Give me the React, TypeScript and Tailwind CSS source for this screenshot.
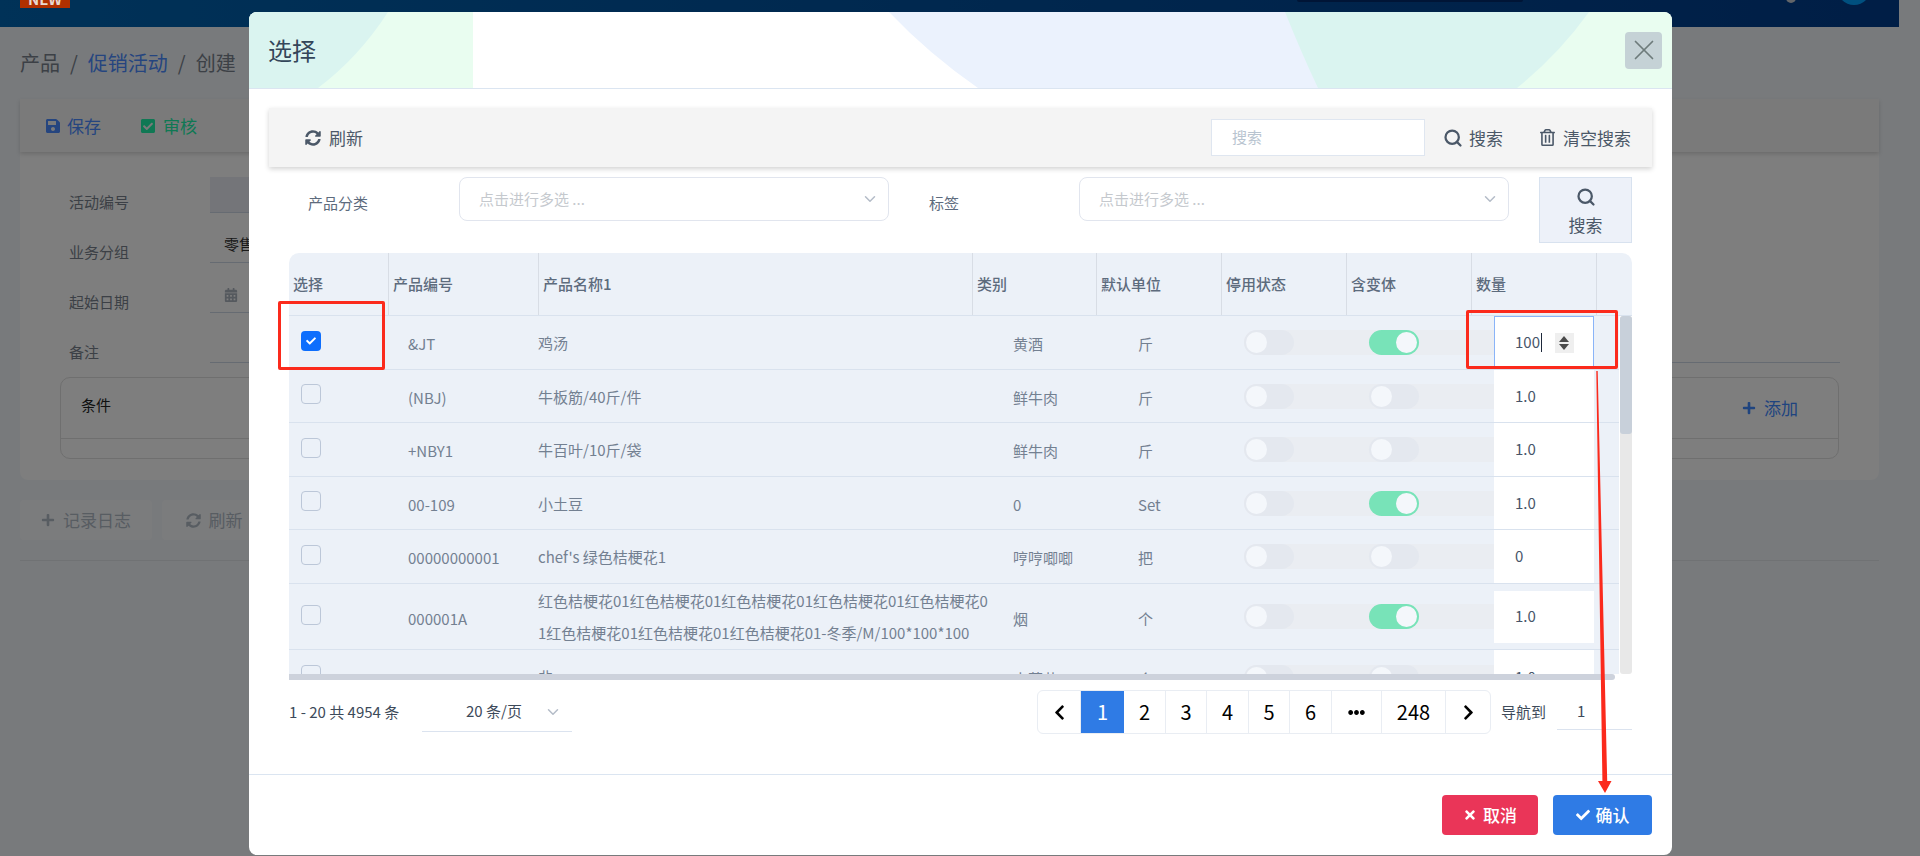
import { ChevronDown, Search, X } from "lucide-react";
import {
  FaCalendarAlt,
  FaCheck,
  FaCheckSquare,
  FaChevronLeft,
  FaChevronRight,
  FaEllipsisH,
  FaPlus,
  FaRegTrashAlt,
  FaSave,
  FaSyncAlt,
  FaTimes,
} from "react-icons/fa";

type Product = {
  code: string;
  name: string;
  category: string;
  unit: string;
  variant: boolean;
  qty: string;
  height: string;
};

const products: Product[] = [
  { code: "(NBJ)", name: "牛板筋/40斤/件", category: "鲜牛肉", unit: "斤", variant: false, qty: "1.0", height: "h-[53px]" },
  { code: "+NBY1", name: "牛百叶/10斤/袋", category: "鲜牛肉", unit: "斤", variant: false, qty: "1.0", height: "h-[54px]" },
  { code: "00-109", name: "小土豆", category: "0", unit: "Set", variant: true, qty: "1.0", height: "h-[53px]" },
  { code: "00000000001", name: "chef's 绿色桔梗花1", category: "哼哼唧唧", unit: "把", variant: false, qty: "0", height: "h-[54px]" },
];

function Toggle({ on }: { on: boolean }) {
  return (
    <div
      className={`flex h-[25px] w-[50px] items-center rounded-full px-[2px] ${
        on ? "justify-end bg-[#78e3b8]" : "justify-start bg-[#e4e8ef]"
      }`}
    >
      <div className="h-[21px] w-[21px] rounded-full bg-[#f4f7fb]" />
    </div>
  );
}

function Checkbox({ checked }: { checked?: boolean }) {
  if (checked) {
    return (
      <div className="mb-[4px] ml-[12px] flex h-[20px] w-[20px] items-center justify-center rounded-[4px] bg-[#0d6efd] text-white">
        <FaCheck size={10} />
      </div>
    );
  }
  return <div className="mb-[4px] ml-[12px] h-[20px] w-[20px] rounded-[4px] border border-[#bcc7d8]" />;
}

function Switches({ variant }: { variant: boolean }) {
  return (
    <div className="w-[273px] pl-[23px]">
      <div className="flex h-[25px] w-[250px] rounded-l-full bg-[#eaedf2]">
        <div className="w-[125px]">
          <Toggle on={false} />
        </div>
        <Toggle on={variant} />
      </div>
    </div>
  );
}

function Row({ p }: { p: Product }) {
  return (
    <div className={`flex items-center border-b border-[#d9e2ee] text-[15px] text-[#738091] ${p.height}`}>
      <div className="w-[99px]">
        <Checkbox />
      </div>
      <div className="mt-[4px] w-[150px] pl-[20px]">{p.code}</div>
      <div className="mt-[1px] w-[462px] whitespace-pre-line leading-[32px]">{p.name}</div>
      <div className="mt-[4px] w-[96px] pl-[13px]">{p.category}</div>
      <div className="mt-[4px] w-[125px] pl-[42px]">{p.unit}</div>
      <Switches variant={p.variant} />
      <div className="flex h-full w-[100px] items-center bg-white pl-[21px] text-[#475569]">{p.qty}</div>
    </div>
  );
}

function ProductTable() {
  const headers = [
    ["选择", "w-[100px]"],
    ["产品编号", "w-[150px]"],
    ["产品名称1", "w-[434px]"],
    ["类别", "w-[124px]"],
    ["默认单位", "w-[125px]"],
    ["停用状态", "w-[125px]"],
    ["含变体", "w-[125px]"],
    ["数量", "w-[125px]"],
  ];
  return (
    <div className="mx-[40px] mt-[10px] w-[1343px]">
      <div className="flex h-[63px] items-stretch rounded-t-[10px] border-b border-[#d9e2ee] bg-[#ecf1f8]">
        {headers.map(([label, width]) => (
          <div
            key={label}
            className={`flex items-center border-r border-[#d8dde5] pl-[4px] text-[15px] font-medium text-[#5d6b7d] ${width}`}
          >
            {label}
          </div>
        ))}
      </div>
      <div className="flex h-[358px] overflow-hidden">
        <div className="w-[1331px] bg-[#ecf1f8]">
          <div className="flex h-[54px] items-center border-b border-[#d9e2ee] text-[15px] text-[#738091]">
            <div className="w-[99px]">
              <Checkbox checked />
            </div>
            <div className="mt-[4px] w-[150px] pl-[20px]">&amp;JT</div>
            <div className="mt-[1px] w-[462px]">鸡汤</div>
            <div className="mt-[4px] w-[96px] pl-[13px]">黄酒</div>
            <div className="mt-[4px] w-[125px] pl-[42px]">斤</div>
            <Switches variant />
            <div className="flex h-full w-[100px] items-center border border-[#8ab4f8] bg-white pl-[20px] text-[#475569]">
              <span>100</span>
              <span className="ml-[1px] h-[19px] w-px bg-[#1e293b]" />
              <div className="ml-[13px] flex h-[20px] w-[19px] flex-col items-center justify-center gap-[2px] bg-[#efefef]">
                <svg width="10" height="6" viewBox="0 0 10 6">
                  <path d="M5 0 10 6H0Z" fill="#4a4a4a" />
                </svg>
                <svg width="10" height="6" viewBox="0 0 10 6">
                  <path d="M0 0H10L5 6Z" fill="#4a4a4a" />
                </svg>
              </div>
            </div>
          </div>
          {products.map((p) => (
            <Row key={p.code} p={p} />
          ))}
          <div className="flex h-[66px] items-center border-b border-[#d9e2ee] text-[15px] text-[#738091]">
            <div className="w-[99px]">
              <Checkbox />
            </div>
            <div className="mt-[6px] w-[150px] pl-[20px]">000001A</div>
            <div className="w-[462px] whitespace-pre-line leading-[32px]">
              {"红色桔梗花01红色桔梗花01红色桔梗花01红色桔梗花01红色桔梗花0\n1红色桔梗花01红色桔梗花01红色桔梗花01-冬季/M/100*100*100"}
            </div>
            <div className="mt-[6px] w-[96px] pl-[13px]">烟</div>
            <div className="mt-[6px] w-[125px] pl-[42px]">个</div>
            <Switches variant />
            <div className="flex h-[52px] w-[100px] items-center bg-white pl-[21px] text-[#475569]">1.0</div>
          </div>
          <div className="flex h-[54px] items-center text-[15px] text-[#738091]">
            <div className="w-[99px]">
              <Checkbox />
            </div>
            <div className="mt-[4px] w-[150px] pl-[20px]">00001</div>
            <div className="mt-[1px] w-[462px]">韭</div>
            <div className="mt-[4px] w-[96px] pl-[13px]">虫草花</div>
            <div className="mt-[4px] w-[125px] pl-[42px]">个</div>
            <Switches variant={false} />
            <div className="flex h-full w-[100px] items-center bg-white pl-[21px] text-[#475569]">1.0</div>
          </div>
        </div>
        <div className="w-[1px]" />
        <div className="h-full w-[12px] rounded-[3px] bg-[#e8e8e8]">
          <div className="h-[118px] rounded-[3px] bg-[#c8d0da]" />
        </div>
      </div>
      <div className="h-[6px] w-[1326px] rounded-r-[3px] bg-[#cdd2dc]" />
    </div>
  );
}

function Pagination() {
  const pages = [
    ["w-[42px]", "2"],
    ["w-[41px]", "3"],
    ["w-[42px]", "4"],
    ["w-[41px]", "5"],
    ["w-[42px]", "6"],
  ];
  return (
    <div className="mx-[40px] mt-[10px] flex h-[44px] w-[1343px] items-center text-[15px] text-[#3d4a5a]">
      <div className="w-[133px]">1 - 20 共 4954 条</div>
      <div className="flex h-[39px] w-[150px] items-center border-b border-[#dbe3ef] pl-[44px]">
        <span>20 条/页</span>
        <ChevronDown size={18} className="ml-[22px] text-[#b4bcc8]" />
      </div>
      <div className="ml-[465px] flex h-[44px] w-[454px] overflow-hidden rounded-[6px] border border-[#e9edf3] text-[20px] text-black">
        <div className="flex w-[43px] items-center justify-center border-r border-[#e9edf3]">
          <FaChevronLeft size={17} />
        </div>
        <div className="flex w-[43px] items-center justify-center bg-[#2f7be5] text-white">1</div>
        {pages.map(([width, n]) => (
          <div key={n} className={`flex items-center justify-center border-r border-[#e9edf3] ${width}`}>
            {n}
          </div>
        ))}
        <div className="flex w-[50px] items-center justify-center border-r border-[#e9edf3]">
          <FaEllipsisH size={17} />
        </div>
        <div className="flex w-[64px] items-center justify-center border-r border-[#e9edf3]">248</div>
        <div className="flex flex-1 items-center justify-center">
          <FaChevronRight size={17} />
        </div>
      </div>
      <div className="ml-[10px] w-[56px]">导航到</div>
      <div className="flex h-[36px] w-[75px] items-center border-b border-[#dbe3ef] pl-[20px]">1</div>
    </div>
  );
}

function Modal() {
  return (
    <div className="ml-[249px] mt-[12px] h-[843px] w-[1423px] rounded-[8px] bg-white">
      <div className="relative flex h-[77px] items-center justify-between overflow-hidden rounded-t-[8px] border-b border-[#dbe5f1] pl-[19px] pr-[10px]">
        <svg className="absolute left-0 top-0" width="1423" height="76" viewBox="0 0 1423 76">
          <rect x="0" y="0" width="224" height="76" fill="#e9fdf0" />
          <path d="M0 0H139Q110 45 69 76H0Z" fill="#daf4f0" />
          <rect x="1000" y="0" width="423" height="76" fill="#e9fdf0" />
          <path d="M1000 0H1340Q1310 42 1268 76H1000Z" fill="#daf4f0" />
          <path d="M640 0H1036Q1052 40 1069 76H729Q680 42 640 0Z" fill="#ebf2fd" />
        </svg>
        <div className="relative text-[24px] text-[#34465a]">选择</div>
        <div className="relative flex h-[37px] w-[37px] items-center justify-center rounded-[4px] bg-[#c5d2d6] text-[#6d7b7b]">
          <X size={34} strokeWidth={1.2} />
        </div>
      </div>

      <div className="mx-[20px] mt-[19px] flex h-[59px] items-center bg-[#f4f4f4] text-[17px] text-[#4b5868] shadow-[0_2px_5px_rgba(0,0,0,0.18)]">
        <div className="ml-[36px] flex items-center gap-[8px]">
          <FaSyncAlt size={16} />
          <span>刷新</span>
        </div>
        <div className="ml-auto flex h-[37px] w-[214px] items-center border border-[#dfe6f0] bg-white pl-[20px] text-[15px] text-[#b8c4d0]">
          搜索
        </div>
        <div className="ml-[18px] flex items-center gap-[6px]">
          <Search size={20} strokeWidth={2.7} />
          <span>搜索</span>
        </div>
        <div className="ml-[36px] mr-[21px] flex items-center gap-[7px]">
          <FaRegTrashAlt size={17} />
          <span>清空搜索</span>
        </div>
      </div>

      <div className="ml-[20px] mt-[10px] flex h-[66px] items-start text-[15px] text-[#5d6b7d]">
        <div className="mt-[15px] w-[190px] pl-[39px]">产品分类</div>
        <div className="flex h-[44px] w-[430px] items-center justify-between rounded-[8px] border border-[#e1e5ee] pl-[19px] pr-[9px] text-[#c5c9ce]">
          <span>点击进行多选 ...</span>
          <ChevronDown size={18} className="text-[#b4bcc8]" />
        </div>
        <div className="mt-[15px] w-[190px] pl-[40px]">标签</div>
        <div className="flex h-[44px] w-[430px] items-center justify-between rounded-[8px] border border-[#e1e5ee] pl-[19px] pr-[9px] text-[#c5c9ce]">
          <span>点击进行多选 ...</span>
          <ChevronDown size={18} className="text-[#b4bcc8]" />
        </div>
        <div className="ml-[30px] flex h-[66px] w-[93px] flex-col items-center border border-[#d8e2ef] bg-[#edf1f9] pt-[9px] text-[17px] text-[#4b5868]">
          <Search size={20} strokeWidth={2.7} />
          <span className="mt-[5px]">搜索</span>
        </div>
      </div>

      <ProductTable />
      <Pagination />

      <div className="mt-[40px] flex h-[81px] justify-end gap-[15px] border-t border-[#dbe5f1] pr-[20px] pt-[20px] text-[17px] font-medium text-white">
        <div className="flex h-[40px] w-[96px] items-center justify-center gap-[6px] rounded-[4px] bg-[#ea3558]">
          <FaTimes size={14} />
          <span>取消</span>
        </div>
        <div className="flex h-[40px] w-[99px] items-center justify-center gap-[6px] rounded-[4px] bg-[#2f7be5]">
          <FaCheck size={14} />
          <span>确认</span>
        </div>
      </div>
    </div>
  );
}

function BackgroundPage() {
  const fields = [
    ["活动编号", "", "w-[800px] bg-[#e8ebf3]"],
    ["业务分组", "零售", "w-[800px]"],
    ["起始日期", "", "w-[800px]"],
    ["备注", "", "w-[1630px]"],
  ];
  return (
    <div>
      <div className="flex h-[27px] w-[1899px] items-start bg-linear-to-r from-[#0064b0] to-[#003c8c]">
        <div className="relative z-10 ml-[20px] h-[8px] w-[50px] overflow-hidden bg-[#b03000] text-center text-[15px] font-bold text-[#e8d8d0]">
          <div className="-mt-[9px] leading-[15px]">NEW</div>
        </div>
        <div className="ml-[1227px] h-[2px] w-[226px] rounded-b bg-[#002a6c]" />
        <div className="ml-[263px] -mt-[7px] h-[10px] w-[10px] rounded-full bg-[#c4cad2]" />
        <div className="ml-[41px] -mt-[29px] h-[34px] w-[34px] rounded-full bg-[#00a0ff]" />
      </div>

      <div className="flex h-[72px] items-center gap-[10px] pl-[20px] text-[20px] text-[#78818c]">
        <span>产品</span>
        <span>/</span>
        <span className="text-[#4a8aff]">促销活动</span>
        <span>/</span>
        <span>创建</span>
      </div>

      <div className="mx-[20px] h-[381px] w-[1859px] rounded-b-[8px] bg-[#fcfcfc]">
        <div className="flex h-[53px] items-center bg-[#f5f5f5] pl-[25px] pt-[1px] text-[17px] shadow-[0_2px_4px_rgba(0,0,0,0.15)]">
          <div className="flex items-center gap-[6px] text-[#4a8aff]">
            <FaSave size={16} />
            <span>保存</span>
          </div>
          <div className="ml-[39px] flex items-center gap-[7px] text-[#20f0a8]">
            <FaCheckSquare size={16} />
            <span>审核</span>
          </div>
        </div>
        <div className="pt-[25px]">
          {fields.map(([label, value, style]) => (
            <div key={label} className="flex h-[50px] pl-[49px] text-[15px] text-[#78818c]">
              <div className="mt-[14px] w-[141px]">{label}</div>
              <div className={`flex h-[36px] items-center border-b border-[#ccd6e4] pl-[14px] text-[#333] ${style}`}>
                {value}
                {label === "起始日期" && <FaCalendarAlt size={14} className="text-[#aab2bd]" />}
              </div>
            </div>
          ))}
          <div className="mx-[40px] h-[82px] rounded-[10px] border border-[#dedede]">
            <div className="flex h-[61px] items-center justify-between border-b border-[#dedede] pl-[20px] pr-[40px] text-[15px] text-[#222]">
              <span className="mb-[5px]">条件</span>
              <div className="flex items-center gap-[8px] text-[17px] text-[#3e88ff]">
                <FaPlus size={14} />
                <span>添加</span>
              </div>
            </div>
          </div>
        </div>
      </div>

      <div className="ml-[20px] mt-[20px] flex gap-[10px] text-[17px] text-[#b0bac5]">
        <div className="flex h-[40px] w-[132px] items-center justify-center gap-[8px] rounded-[4px] bg-[#f7f9fb]">
          <FaPlus size={14} />
          <span>记录日志</span>
        </div>
        <div className="flex h-[40px] w-[104px] items-center justify-center gap-[8px] rounded-[4px] bg-[#f7f9fb]">
          <FaSyncAlt size={15} />
          <span>刷新</span>
        </div>
      </div>
      <div className="ml-[20px] mt-[20px] w-[1859px] border-t border-[#e0e4e8]" />
    </div>
  );
}

export default function App() {
  return (
    <div className="relative h-[856px] w-[1920px] overflow-hidden bg-[#f0f4f8] font-['Noto_Sans_CJK_SC',sans-serif]">
      <BackgroundPage />
      <div className="absolute inset-0 bg-black/50">
        <Modal />
      </div>

      {/* red markup drawn on the screenshot */}
      <div className="absolute left-[278px] top-[301px] h-[69px] w-[107px] rounded-[2px] border-[3px] border-[#fb2a1c]" />
      <div className="absolute left-[1466px] top-[310px] h-[59px] w-[152px] rounded-[2px] border-[3px] border-[#fb2a1c]" />
      <svg className="absolute left-[1590px] top-[365px]" width="30" height="435" viewBox="0 0 30 435">
        <path
          d="M6.3 6 7.7 6 17.2 416 21.5 416 15 428 8 416 12.4 416Z"
          fill="#fb2a1c"
        />
      </svg>
    </div>
  );
}
